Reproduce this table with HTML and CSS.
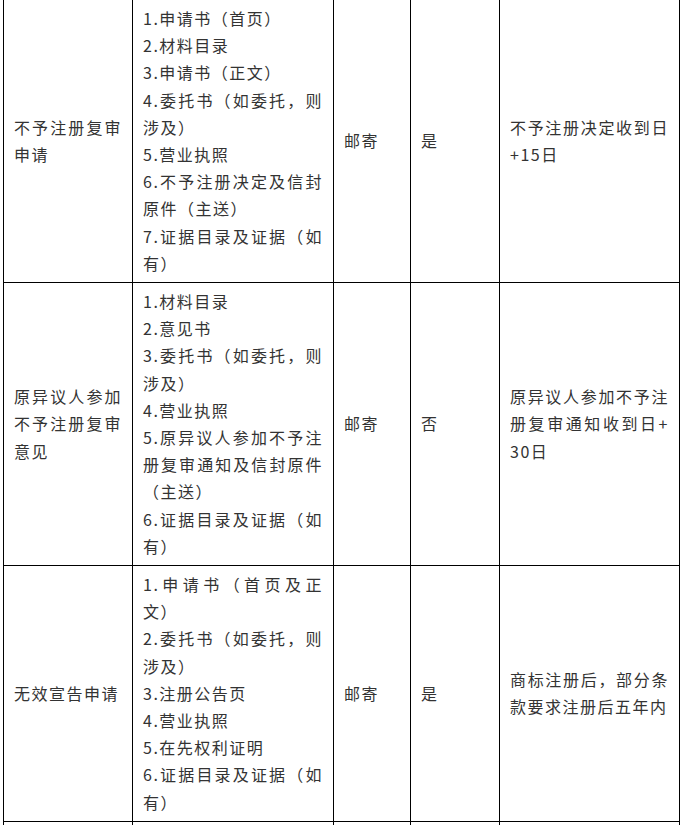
FILE: index.html
```html
<!DOCTYPE html>
<html lang="zh-CN">
<head>
<meta charset="utf-8">
<title>商标申请材料表</title>
<link rel="stylesheet" href="styles.css">
</head>
<body>
<table class="grid">
  <colgroup>
    <col class="c1"><col class="c2"><col class="c3"><col class="c4"><col class="c5">
  </colgroup>
  <tbody>
    <tr>
      <td>不予注册复审申请</td>
      <td class="list">
        <div class="item">1.申请书（首页）</div>
        <div class="item">2.材料目录</div>
        <div class="item">3.申请书（正文）</div>
        <div class="item">4.委托书（如委托，则涉及）</div>
        <div class="item">5.营业执照</div>
        <div class="item"><span class="line">6.不予注册决定及信封</span>原件（主送）</div>
        <div class="item">7.证据目录及证据（如有）</div>
      </td>
      <td>邮寄</td>
      <td>是</td>
      <td class="due">不予注册决定收到日+15日</td>
    </tr>
    <tr>
      <td>原异议人参加不予注册复审意见</td>
      <td class="list">
        <div class="item">1.材料目录</div>
        <div class="item">2.意见书</div>
        <div class="item">3.委托书（如委托，则涉及）</div>
        <div class="item">4.营业执照</div>
        <div class="item">5.原异议人参加不予注册复审通知及信封原件（主送）</div>
        <div class="item">6.证据目录及证据（如有）</div>
      </td>
      <td>邮寄</td>
      <td>否</td>
      <td class="due">原异议人参加不予注册复审通知收到日+30日</td>
    </tr>
    <tr>
      <td>无效宣告申请</td>
      <td class="list">
        <div class="item">1.申请书（首页及正文）</div>
        <div class="item">2.委托书（如委托，则涉及）</div>
        <div class="item">3.注册公告页</div>
        <div class="item">4.营业执照</div>
        <div class="item">5.在先权利证明</div>
        <div class="item">6.证据目录及证据（如有）</div>
      </td>
      <td>邮寄</td>
      <td>是</td>
      <td class="due">商标注册后，部分条款要求注册后五年内</td>
    </tr>
    <tr class="next">
      <td></td><td></td><td></td><td></td><td></td>
    </tr>
  </tbody>
</table>
</body>
</html>
```
FILE: styles.css
```css
html, body {
  margin: 0;
  padding: 0;
  background: #ffffff;
}

body {
  padding-left: 3px;
  font-family: "Noto Sans CJK SC", "Microsoft YaHei", sans-serif;
  font-size: 16px;
  line-height: 27.2px;
  letter-spacing: 1.5px;
  color: #333333;
}

.grid {
  border-collapse: collapse;
  table-layout: fixed;
  width: 677px;
  margin-top: -1px;
}

.c1 { width: 129px; }
.c2 { width: 201px; }
.c3 { width: 77px; }
.c4 { width: 89px; }
.c5 { width: 180px; }

.grid td {
  border: 1px solid #000000;
  padding: 5px 10px;
  vertical-align: middle;
  text-align: justify;
  word-break: break-all;
}

.item {
  text-align: justify;
}

.line {
  display: block;
  text-align-last: justify;
}

.next td {
  height: 60px;
}
```
